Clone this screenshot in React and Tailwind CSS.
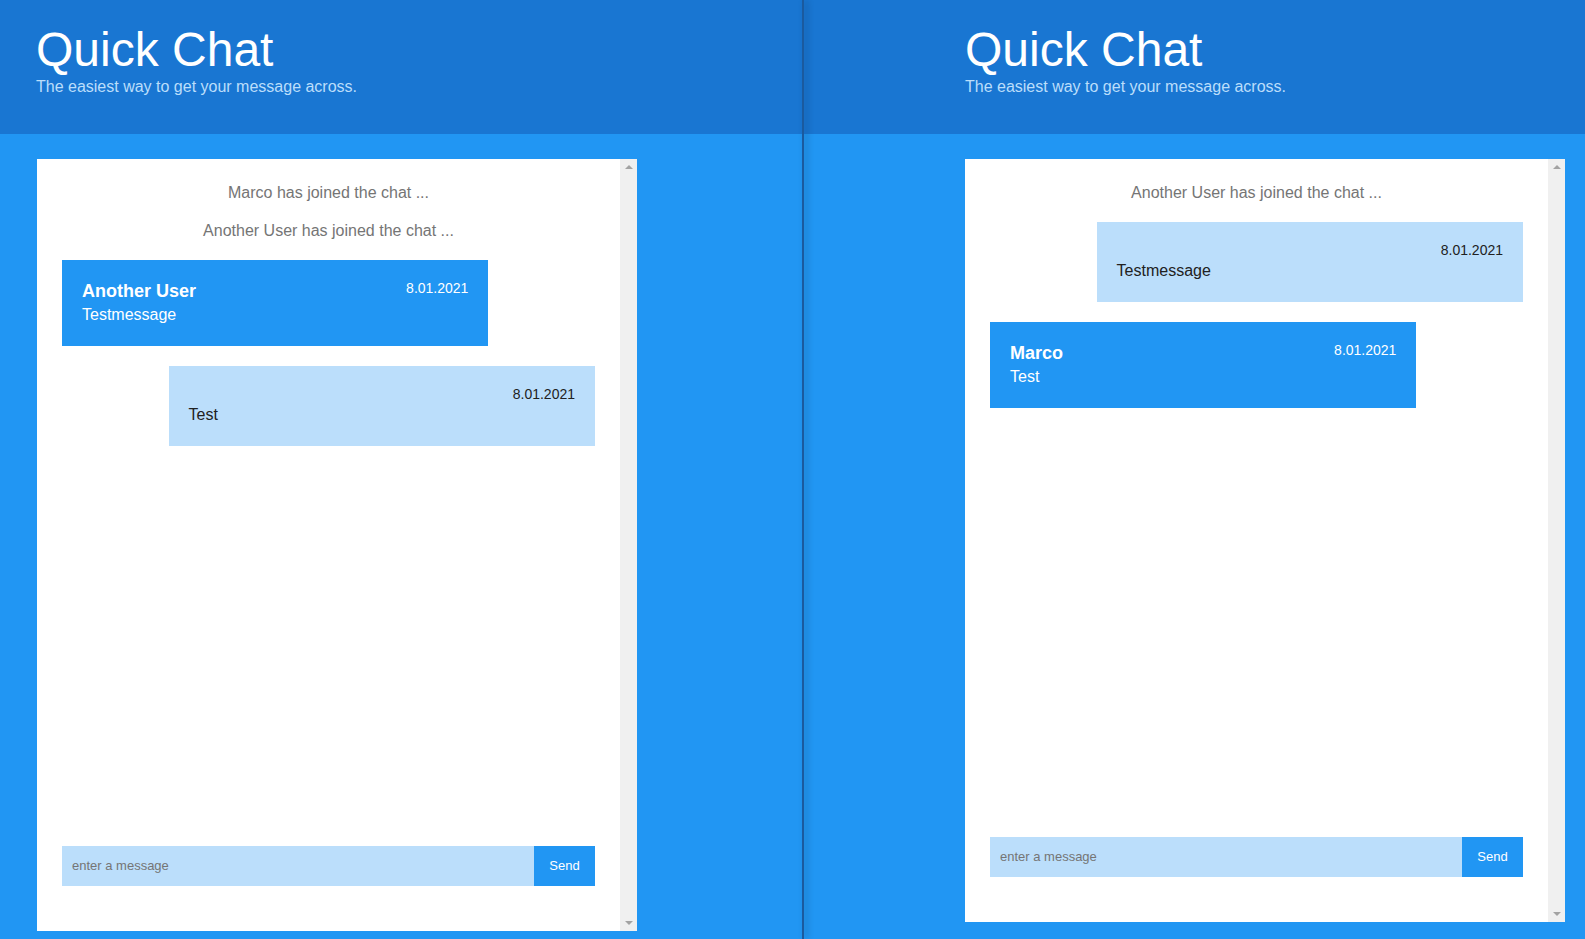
import React from 'react';

const Notice = ({ text }) => (
  <p className="text-center text-[16px] leading-[18px] text-[#757575]">{text}</p>
);

const Bubble = ({ name, date, text, mine }) => (
  <div
    className={`w-[80%] p-5 ${
      mine ? 'self-end bg-[#bbdefb] text-[#212121]' : 'self-start bg-[#2196f3] text-white'
    }`}
  >
    <div className="flex items-start justify-between">
      {name ? <span className="text-[18px] leading-[22px] font-black">{name}</span> : <span />}
      <span className="text-[14px] leading-[16px]">{date}</span>
    </div>
    <p className="mt-0.5 text-[16px] leading-[22px]">{text}</p>
  </div>
);

const Scrollbar = () => (
  <div className="w-[17px] bg-[#f0f0f0] flex flex-col items-center justify-between py-[6px]">
    <div className="w-0 h-0 border-x-[4px] border-x-transparent border-b-[4px] border-b-[#a3a3a3]" />
    <div className="w-0 h-0 border-x-[4px] border-x-transparent border-t-[4px] border-t-[#a3a3a3]" />
  </div>
);

const ChatWindow = ({ items, height }) => (
  <div className={`flex w-[600px] bg-white ${height}`}>
    <div className="flex-1 flex flex-col p-[25px] pb-[45px]">
      <div className="flex-1 flex flex-col gap-5">
        {items.map((m, i) =>
          m.notice ? <Notice key={i} text={m.notice} /> : <Bubble key={i} {...m} />
        )}
      </div>
      <form className="flex h-[40px]" onSubmit={e => e.preventDefault()}>
        <input
          placeholder="enter a message"
          className="flex-1 bg-[#bbdefb] px-[10px] text-[13px] text-[#212121] placeholder:text-[#757575] outline-none"
        />
        <button className="w-[61px] bg-[#2196f3] text-white text-[13px]">Send</button>
      </form>
    </div>
    <Scrollbar />
  </div>
);

const Header = ({ pad }) => (
  <header className={`h-[134px] bg-[#1976d2] pt-[26px] ${pad}`}>
    <h1 className="text-[48px] leading-[48px] text-white">Quick Chat</h1>
    <p className="mt-[4px] text-[16px] leading-[18px] text-[#bbdefb]">The easiest way to get your message across.</p>
  </header>
);

export default function App() {
  const left = [
    { notice: 'Marco has joined the chat ...' },
    { notice: 'Another User has joined the chat ...' },
    { name: 'Another User', date: '8.01.2021', text: 'Testmessage' },
    { mine: true, date: '8.01.2021', text: 'Test' },
  ];
  const right = [
    { notice: 'Another User has joined the chat ...' },
    { mine: true, date: '8.01.2021', text: 'Testmessage' },
    { name: 'Marco', date: '8.01.2021', text: 'Test' },
  ];

  return (
    <div className="flex h-[939px] overflow-hidden bg-[#2196f3]" style={{ fontFamily: '"Liberation Sans", Arial, sans-serif' }}>
      <div className="w-[802px] flex flex-col">
        <Header pad="pl-[36px]" />
        <div className="pl-[37px] pt-[25px]">
          <ChatWindow items={left} height="h-[772px]" />
        </div>
      </div>
      {/* window edge */}
      <div className="relative z-10 w-[2px] bg-[#1b5a9e] shadow-[3px_0_6px_rgba(0,0,0,0.3)]" />
      <div className="flex-1 flex flex-col">
        <Header pad="pl-[161px]" />
        <div className="pl-[161px] pt-[25px]">
          <ChatWindow items={right} height="h-[763px]" />
        </div>
      </div>
    </div>
  );
}
